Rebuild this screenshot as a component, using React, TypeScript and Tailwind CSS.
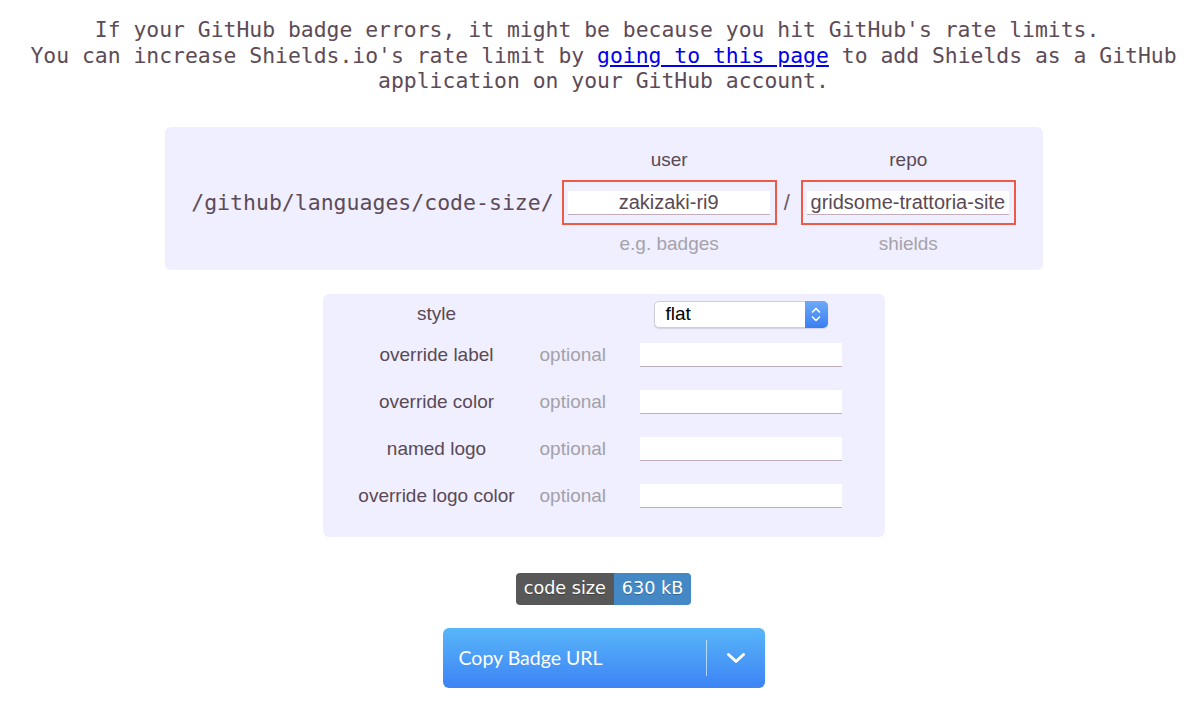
import React from "react";

const sans = "font-['Liberation_Sans',Arial,sans-serif]";

function FieldInput({ value }: { value?: string }) {
  return (
    <div
      className={`h-[24px] w-[202px] bg-white border-b border-[#c2afbd] flex items-center justify-center text-[20px] text-[#5a4955] ${sans}`}
    >
      {value}
    </div>
  );
}

function PathField({ label, value, hint }: { label: string; value: string; hint: string }) {
  return (
    <div className={`flex flex-col items-center ${sans}`}>
      <div className="text-[19px] leading-[22px] text-[#5a4955]">{label}</div>
      <div className="mt-[9px] border-2 border-[#ee5a48] pt-[9px] pb-[8px] pl-[4px] pr-[5px]">
        <FieldInput value={value} />
      </div>
      <div className="mt-[8px] text-[19px] leading-[22px] text-[#a5a2ab]">{hint}</div>
    </div>
  );
}

function OptionRow({ label }: { label: string }) {
  return (
    <div className="flex items-center h-[47px]">
      <div className="w-[198px] text-center text-[19px] text-[#5a4955]">{label}</div>
      <div className="w-[104px] pl-[4px] text-[19px] text-[#a3a1a8]">optional</div>
      <div className="w-[202px]">
        <FieldInput />
      </div>
    </div>
  );
}

function StyleSelect() {
  return (
    <div className="relative h-[27px] w-[174px] rounded-[5px] bg-white border border-[#cfcdd6] shadow-[0_1px_1px_rgba(0,0,0,0.12)] flex items-center">
      <span className={`pl-[11px] text-[19px] text-black ${sans}`}>flat</span>
      <div className="absolute right-[-1px] top-[-1px] bottom-[-1px] w-[23px] rounded-r-[5px] bg-[linear-gradient(180deg,#6eaaf9,#3a7ef3)] flex items-center justify-center">
        <svg width="10" height="17" viewBox="0 0 10 17" fill="none">
          <path d="M1.5 6 L5 2.5 L8.5 6" stroke="white" strokeWidth="1.6" strokeLinecap="round" strokeLinejoin="round" />
          <path d="M1.5 11 L5 14.5 L8.5 11" stroke="white" strokeWidth="1.6" strokeLinecap="round" strokeLinejoin="round" />
        </svg>
      </div>
    </div>
  );
}

export default function App() {
  return (
    <div className="w-[1200px] min-h-[710px] bg-white pl-[7px] flex flex-col items-center">
      {/* rate-limit notice */}
      <p className="pt-[17px] text-center font-['DejaVu_Sans_Mono',monospace] text-[21.4px] leading-[25.5px] text-[#5d4b57] whitespace-nowrap">
        If your GitHub badge errors, it might be because you hit GitHub's rate limits.{"\u00a0"}
        <br />
        You can increase Shields.io's rate limit by{" "}
        <a href="#" className="text-[#0000ee] underline">
          going to this page
        </a>{" "}
        to add Shields as a GitHub
        <br />
        application on your GitHub account.
      </p>

      {/* path builder */}
      <div className="mt-[33px] w-[878px] rounded-[6px] bg-[#f0efff] pt-[22px] pb-[15px] flex items-center justify-center">
        <span className="font-['DejaVu_Sans_Mono',monospace] text-[21.5px] leading-[25px] text-[#5d4b57] mr-[8px] mt-[2px]">
          /github/languages/code-size/
        </span>
        <PathField label="user" value="zakizaki-ri9" hint="e.g. badges" />
        <span className={`ml-[7px] mr-[11px] text-[22px] text-[#6b5a66] mt-[1px] ${sans}`}>/</span>
        <PathField label="repo" value="gridsome-trattoria-site" hint="shields" />
      </div>

      {/* query options */}
      <div className={`mt-[24px] w-[562px] rounded-[6px] bg-[#f0efff] pt-[7px] pb-[17px] pl-[15px] pr-[43px] ${sans}`}>
        <div className="flex items-center h-[27px]">
          <div className="w-[198px] text-center text-[19px] text-[#5a4955]">style</div>
          <div className="w-[104px]" />
          <div className="w-[202px] flex justify-center">
            <StyleSelect />
          </div>
        </div>
        <div className="mt-[4px]">
          <OptionRow label="override label" />
          <OptionRow label="override color" />
          <OptionRow label="named logo" />
          <OptionRow label="override logo color" />
        </div>
      </div>

      {/* badge preview */}
      <div className="mt-[36px] flex h-[32px] rounded-[4px] overflow-hidden font-['DejaVu_Sans',Verdana,sans-serif] text-[17.6px] text-white [text-shadow:0_1px_0_rgba(1,1,1,0.3)]">
        <span className="flex items-center bg-[#585858] px-[8px]">code size</span>
        <span className="flex items-center bg-[#4588c6] px-[8px]">630 kB</span>
      </div>

      {/* copy button */}
      <div className="mt-[23px] relative h-[60px] w-[322px] rounded-[6px] bg-[linear-gradient(180deg,#58b6f9,#3d83f5)] flex items-center">
        <span className="pl-[16px] font-['Lato',sans-serif] text-[19.5px] text-white">Copy Badge URL</span>
        <div className="ml-auto h-[36px] w-px bg-white/60" />
        <div className="w-[58px] flex items-center justify-center">
          <svg width="20" height="12" viewBox="0 0 20 12" fill="none">
            <path d="M2.5 2.5 L10 9.5 L17.5 2.5" stroke="white" strokeWidth="3" strokeLinecap="round" strokeLinejoin="round" />
          </svg>
        </div>
      </div>
    </div>
  );
}
